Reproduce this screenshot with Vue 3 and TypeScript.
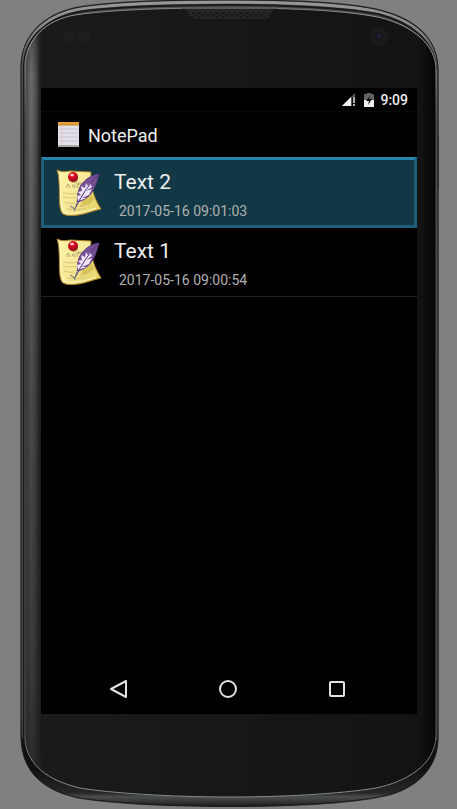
<script setup lang="ts">
import { ref } from 'vue'

interface Note {
  id: number
  title: string
  modified: string
}

const notes: Note[] = [
  { id: 2, title: 'Text 2', modified: '2017-05-16 09:01:03' },
  { id: 1, title: 'Text 1', modified: '2017-05-16 09:00:54' },
]
const selected = ref(2)
</script>

<template>
  <div class="device">
    <svg class="shell" viewBox="0 0 457 809" preserveAspectRatio="none" aria-hidden="true">
      <defs>
        <linearGradient id="rim" x1="0" y1="0" x2="0" y2="809" gradientUnits="userSpaceOnUse">
          <stop offset="0" stop-color="#5a5a5a" />
          <stop offset="0.04" stop-color="#303030" />
          <stop offset="0.5" stop-color="#2c2c2c" />
          <stop offset="0.95" stop-color="#101010" />
          <stop offset="0.98" stop-color="#262828" />
          <stop offset="0.985" stop-color="#4b4e4e" />
          <stop offset="0.992" stop-color="#303232" />
          <stop offset="1" stop-color="#080808" />
        </linearGradient>
        <linearGradient id="sheen" x1="0" y1="0" x2="0" y2="809" gradientUnits="userSpaceOnUse">
          <stop offset="0" stop-color="#999" />
          <stop offset="0.03" stop-color="#888" />
          <stop offset="0.08" stop-color="#505050" />
          <stop offset="0.2" stop-color="#484848" />
          <stop offset="0.88" stop-color="#484848" />
          <stop offset="0.92" stop-color="#333" />
        </linearGradient>
        <linearGradient id="line" x1="0" y1="0" x2="0" y2="809" gradientUnits="userSpaceOnUse">
          <stop offset="0" stop-color="#70757c" />
          <stop offset="0.04" stop-color="#a4a6a8" />
          <stop offset="0.09" stop-color="#888" />
          <stop offset="0.15" stop-color="#505050" />
          <stop offset="0.9" stop-color="#555" />
          <stop offset="0.95" stop-color="#888" />
          <stop offset="1" stop-color="#858888" />
        </linearGradient>
        <linearGradient id="face" x1="24" y1="0" x2="437" y2="0" gradientUnits="userSpaceOnUse">
          <stop offset="0" stop-color="#242424" />
          <stop offset="0.02" stop-color="#2c2c2c" />
          <stop offset="0.045" stop-color="#1a1a1a" />
          <stop offset="0.5" stop-color="#171717" />
          <stop offset="0.96" stop-color="#131313" />
          <stop offset="1" stop-color="#030303" />
        </linearGradient>
        <linearGradient id="side" x1="25" y1="0" x2="41" y2="0" gradientUnits="userSpaceOnUse">
          <stop offset="0" stop-color="#858585" stop-opacity="0.4" />
          <stop offset="0.4" stop-color="#858585" stop-opacity="0.9" />
          <stop offset="0.7" stop-color="#777" stop-opacity="0.6" />
          <stop offset="1" stop-color="#444" stop-opacity="0" />
        </linearGradient>
        <linearGradient id="fade" x1="0" y1="30" x2="0" y2="770" gradientUnits="userSpaceOnUse">
          <stop offset="0" stop-color="#fff" stop-opacity="0.4" />
          <stop offset="0.06" stop-color="#fff" stop-opacity="0.8" />
          <stop offset="0.25" stop-color="#fff" stop-opacity="0.6" />
          <stop offset="0.5" stop-color="#fff" stop-opacity="0.4" />
          <stop offset="0.85" stop-color="#fff" stop-opacity="0.2" />
          <stop offset="1" stop-color="#fff" stop-opacity="0" />
        </linearGradient>
        <mask id="sideFade" maskUnits="userSpaceOnUse" x="0" y="0" width="457" height="809">
          <rect width="457" height="809" fill="url(#fade)" />
        </mask>
        <clipPath id="faceClip">
          <path d="M25 65C26 40 45 20 75 15C115 9 175 8 230 8C300 8 350 11 382 18C412 26 436 44 436 70V736C435 766 405 782 376 788C340 794 280 797 230 797C170 797 110 793 80 788C50 781 26 766 25 738Z" />
        </clipPath>
        <pattern id="mesh" width="6" height="4" patternUnits="userSpaceOnUse">
          <rect width="6" height="4" fill="#252525" />
          <circle cx="1" cy="1" r="1" fill="#151515" />
          <circle cx="4" cy="3" r="1" fill="#151515" />
        </pattern>
      </defs>
      <path d="M437 135H439V189H437Z" fill="#252525" />
      <path
        d="M21 65C22 30 50 11 80 6C120 0 170-1 230-1C300-1 345 2 375 8C415 17 438 37 438 70V740C437 774 410 790 388 796C350 805 280 807 230 807C160 807 100 803 75 798C45 790 22 774 21 738Z"
        fill="url(#rim)"
      />
      <path
        d="M22 738V65C24 33 50 14 80 9C120 3 170 2 230 2C300 2 345 5 375 11C413 20 436 39 437 70V740"
        fill="none" stroke="url(#sheen)" stroke-width="3"
      />
      <path
        d="M24 738V65C25 37 48 18 78 12C118 6 170 5 230 5C300 5 345 8 378 14C413 23 435 42 436 70"
        fill="none" stroke="#17191b" stroke-width="2"
      />
      <path
        d="M21 738V65C22 31 50 12 80 7C120 1 170 0 230 0C300 0 345 3 375 9C414 18 438 37 438 70V740C437 773 410 789 388 795C350 804 280 806 230 806C160 806 100 802 75 797C45 789 22 774 21 738Z"
        fill="none" stroke="#1c1c1c" stroke-width="1"
      />
      <g clip-path="url(#faceClip)">
        <rect x="24" y="7" width="413" height="791" fill="url(#face)" />
        <rect x="25" y="15" width="16" height="755" fill="url(#side)" mask="url(#sideFade)" />
      </g>
      <path
        d="M25 65C26 40 45 20 75 15C115 9 175 8 230 8C300 8 350 11 382 18C412 26 436 44 436 70V736C435 766 405 782 376 788C340 794 280 797 230 797C170 797 110 793 80 788C50 781 26 766 25 738Z"
        fill="none" stroke="url(#line)" stroke-width="1"
      />
      <path d="M181 8H278C273 9 272 12 270 15C269 18 267 19 264 19H196C193 19 191 18 189 15C187 12 186 9 181 8Z" fill="#222426" />
      <path d="M189 12H270L268 16L264 18H196L191 16Z" fill="url(#mesh)" />
      <path d="M183 8H276" stroke="#55585d" stroke-width="2" />
      <circle cx="69" cy="37" r="6" fill="#1e1e1e" />
      <circle cx="84" cy="37" r="6" fill="#1e1e1e" />
      <circle cx="379" cy="37" r="9" fill="#1b1b1c" />
      <circle cx="379" cy="37" r="4" fill="#15161c" />
      <circle cx="379" cy="36" r="2" fill="#1e2036" />
    </svg>

    <svg class="symbols" aria-hidden="true">
      <defs>
        <linearGradient id="paper" x1="0" y1="0" x2="1" y2="1">
          <stop offset="0" stop-color="#fff3a8" />
          <stop offset="0.5" stop-color="#f6e998" />
          <stop offset="1" stop-color="#e0ce5c" />
        </linearGradient>
        <radialGradient id="pin" cx="0.4" cy="0.3" r="0.7">
          <stop offset="0" stop-color="#ff7078" />
          <stop offset="0.35" stop-color="#dc1024" />
          <stop offset="1" stop-color="#8c0514" />
        </radialGradient>
      </defs>
      <symbol id="note" viewBox="0 0 46 48">
        <path d="M1 2C5 4 9 4 14 3L35 4C34 16 37 29 45 41C36 43 30 46 22 47C15 48 9 48 6 45C2 38 4 24 3 14C3 9 2 5 1 2Z" fill="url(#paper)" stroke="#a9822b" />
        <path d="M4 6C5 20 3 34 8 44C17 47 29 44 40 40" fill="none" stroke="#fffac8" stroke-width="1" />
        <path d="M24 39C30 38 36 35 38 31C36 28 36 26 35 23L26 34Z" fill="#cdb13a" opacity="0.6" />
        <path d="M7 25Q16 27 25 25M7 29Q14 31 22 29M8 34Q13 36 19 35M24 38Q29 38 35 35M11 41Q21 43 31 40" fill="none" stroke="#d8c67c" stroke-width="1" />
        <path d="M11 20V17Q13 15 14 20M16 18Q18 15 19 18T16 18M21 20L23 14M20 16H24M25 18Q28 16 26 15T25 18" fill="none" stroke="#b3a678" stroke-width="1" />
        <circle cx="18" cy="11" r="4" fill="#8b6830" opacity="0.5" />
        <circle cx="17" cy="9" r="5" fill="url(#pin)" />
        <ellipse cx="16" cy="7" rx="2" ry="1" fill="#ffd2cf" />
        <path d="M43 6C35 7 28 12 24 19C21 25 22 30 21 34C27 33 33 29 36 24C40 18 41 12 43 6Z" fill="#765094" stroke="#5b3c80" />
        <path d="M34 15L36 19L30 23L36 21L33 27L26 30L31 30L22 33L21 28L25 27L22 24L26 23L25 18L29 20L30 15L32 18Z" fill="#eee4f5" />
        <path d="M41 8Q28 22 20 39" fill="none" stroke="#51317b" stroke-width="1" />
        <path d="M21 35L19 41L14 38M18 40L19 43" fill="none" stroke="#667085" stroke-width="1" />
      </symbol>
    </svg>

    <main class="screen">
      <header class="status">
        <svg class="signal" viewBox="0 0 14 13" role="img" aria-label="Mobile signal">
          <path d="M0 13L13 0V13Z" fill="#555" />
          <path d="M0 13L9 4V13Z" fill="#eee" />
          <path d="M10 4H14V13H10Z" fill="#111" />
          <path d="M11 4H13V10H11ZM11 11H13V13H11Z" fill="#aaa" />
        </svg>
        <svg class="battery" viewBox="0 0 10 14" role="img" aria-label="Battery charging">
          <path d="M3 0H7V1H10V14H0V1H3Z" fill="#626262" />
          <path d="M0 7H10V14H0Z" fill="#eee" />
          <path d="M6 3L2 8H5L4 12L8 6H5Z" fill="#080808" />
        </svg>
        <time>9:09</time>
      </header>
      <header class="appbar">
        <svg class="pad" viewBox="0 0 21 25" aria-hidden="true">
          <rect width="21" height="25" rx="1" fill="#e2e2e6" />
          <path d="M0 23H21V24Q21 25 20 25H1Q0 25 0 24Z" fill="#aaa9a5" />
          <path d="M0 1Q0 0 1 0H20Q21 0 21 1V3H0Z" fill="#e8a12c" />
          <path d="M0 3H21" stroke="#b98338" />
          <path d="M1 7H20M1 11H20M1 15H20M1 19H20" stroke="#c3c4dc" stroke-width="1" />
          <path d="M4 4V23" stroke="#ecc0c3" stroke-width="1" />
        </svg>
        <h1>NotePad</h1>
      </header>
      <ul class="notes">
        <li v-for="note in notes" :key="note.id">
          <button
            type="button"
            class="note"
            :class="{ active: selected === note.id }"
            @click="selected = note.id"
          >
            <svg class="thumb" aria-hidden="true"><use href="#note" /></svg>
            <span class="copy">
              <span class="title">{{ note.title }}</span>
              <span class="date">{{ note.modified }}</span>
            </span>
          </button>
        </li>
      </ul>
      <nav class="navbar">
        <button type="button" aria-label="Back">
          <svg viewBox="0 0 20 20"><path d="M17 2V18L2 10Z" /></svg>
        </button>
        <button type="button" aria-label="Home">
          <svg viewBox="0 0 20 20"><circle cx="10" cy="10" r="8" /></svg>
        </button>
        <button type="button" aria-label="Recent apps">
          <svg viewBox="0 0 20 20"><rect x="3" y="3" width="14" height="14" rx="1" /></svg>
        </button>
      </nav>
    </main>
  </div>
</template>

<style>
body {
  background: #808080;
}
</style>

<style scoped>
.device {
  position: relative;
  box-sizing: border-box;
  display: flex;
  min-height: 100vh;
  padding: 88px 40px 95px 41px;
  font-family: Roboto, "Liberation Sans", sans-serif;
}
.shell {
  position: absolute;
  inset: 0;
  width: 100%;
  height: 100%;
}
.symbols {
  position: absolute;
  width: 0;
  height: 0;
}
.screen {
  position: relative;
  display: flex;
  flex: 1;
  flex-direction: column;
  min-width: 0;
  background: #000;
  color: #eee;
}
.status {
  display: flex;
  align-items: center;
  justify-content: flex-end;
  box-sizing: border-box;
  height: 24px;
  padding: 0 9px;
  border-bottom: 1px solid #080808;
}
.signal {
  width: 14px;
  height: 13px;
  margin-right: 8px;
}
.battery {
  width: 10px;
  height: 14px;
  margin-right: 6px;
}
time {
  font-size: 14px;
  font-weight: 500;
  line-height: 24px;
}
.appbar {
  display: flex;
  align-items: center;
  gap: 9px;
  height: 45px;
  padding: 0 17px;
}
.pad {
  width: 21px;
  height: 25px;
}
h1 {
  margin: 0;
  padding-top: 2px;
  font-size: 18px;
  font-weight: 400;
  line-height: 24px;
}
.notes {
  flex: 1;
  margin: 0;
  padding: 0;
  list-style: none;
}
.note {
  display: flex;
  box-sizing: border-box;
  width: 100%;
  height: 69px;
  padding: 9px 15px;
  gap: 12px;
  border: 0;
  border-bottom: 1px solid #222;
  background: #000;
  color: #eee;
  font: inherit;
  text-align: left;
}
.note.active {
  height: 71px;
  padding: 8px 12px;
  border: 3px solid #1e5e79;
  border-top-color: #2785ad;
  background: #123846;
}
.thumb {
  flex: none;
  width: 46px;
  height: 48px;
}
.copy {
  display: flex;
  flex-direction: column;
}
.title {
  padding-top: 1px;
  font-size: 21px;
  line-height: 26px;
}
.date {
  padding: 6px 5px 0;
  color: #b0b0b0;
  font-size: 14px;
  line-height: 20px;
}
.navbar {
  display: flex;
  justify-content: center;
  gap: 61px;
  padding: 0 2px 1px 0;
}
.navbar button {
  display: flex;
  align-items: center;
  justify-content: center;
  width: 48px;
  height: 48px;
  padding: 0;
  border: 0;
  background: none;
}
.navbar svg {
  width: 20px;
  height: 20px;
  fill: none;
  stroke: #e2e2e2;
  stroke-width: 2;
  stroke-linejoin: round;
}
</style>
